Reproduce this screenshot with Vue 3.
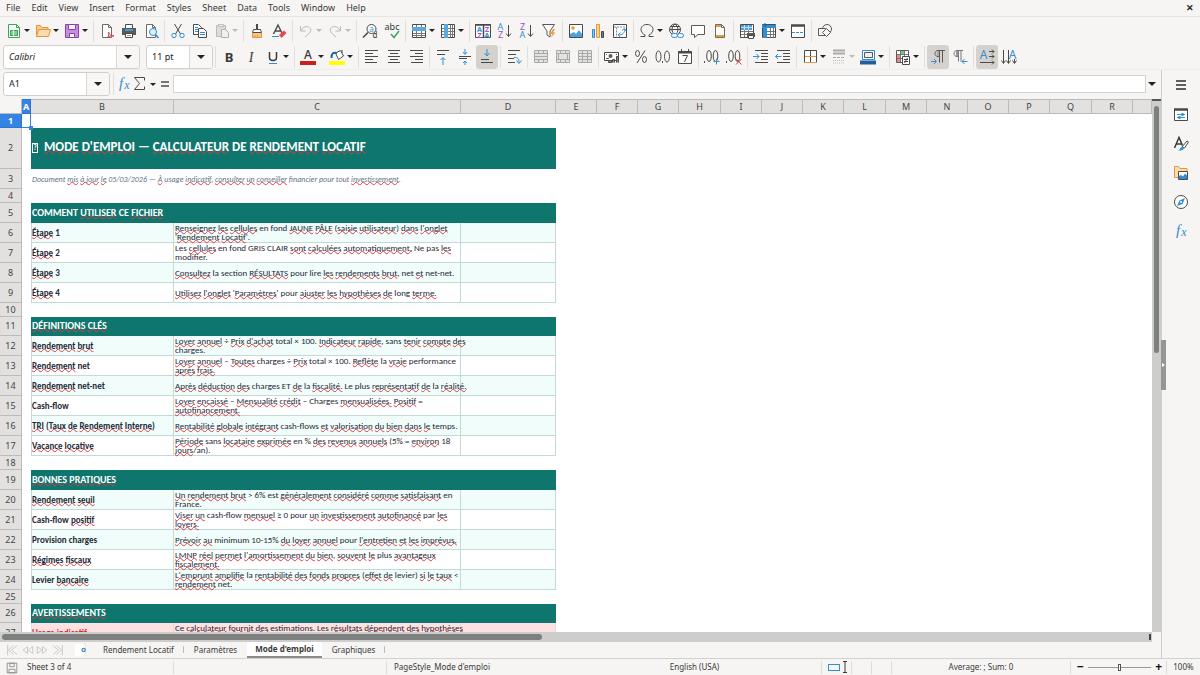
<script setup>
import { ref } from 'vue'

const menus = ['File', 'Edit', 'View', 'Insert', 'Format', 'Styles', 'Sheet', 'Data', 'Tools', 'Window', 'Help']

const lines = (rows) => `<path d="${rows.map(([x, y, w]) => `M${x} ${y}h${w}`).join('')}" stroke="#4a4a48"/>`
const glyph = (x, y, size, fill, text, extra = '') =>
  `<text x="${x}" y="${y}" font-size="${size}" fill="${fill}" text-anchor="middle" ${extra}>${text}</text>`
const page = '<path d="M3.5 1.5h6l3 3v10h-9z" fill="#fff" stroke="#6b6b69"/><path d="M9.5 1.5v3h3" stroke="#6b6b69"/>'
const gridBox = '<path d="M1.5 1.5h13v13h-13z" fill="#fff" stroke="#4a4a48"/>'

const icons = {
  new: '<path d="M2.5 1.5h8l3 3v10h-11z" fill="#fff" stroke="#3aa655"/><path d="M10.5 1.5v3h3" stroke="#3aa655"/><path d="M4 7h8v6H4z" fill="#3aa655"/><path d="M5 9h6M5 11h6M7.5 7v6" stroke="#d6f2dd"/>',
  open: '<path d="M1.5 13.5v-11h4l1.5 2h6v2" fill="#f8c98c" stroke="#e8953d"/><path d="M1.5 13.5l2-7h12l-2 7z" fill="#fbdcae" stroke="#e8953d"/>',
  save: '<path d="M1.5 1.5h13v13h-13z" fill="#c88be0" stroke="#8e3fae"/><path d="M4.5 1.5h7v5h-7z" fill="#fff" stroke="#8e3fae"/><path d="M5.5 10.5h5v4h-5z" fill="#fff" stroke="#8e3fae"/>',
  pdf: page + '<path d="M8 15c2-2 2-4 1.5-6c1 3 3 4 5.5 4c-3-.5-5 0-7 2" stroke="#e0393e"/>',
  print: '<path d="M4.5 5V1.5h7V5" fill="#fff" stroke="#4a4a48"/><path d="M1 5h14v7H1z" fill="#5a5a58"/><path d="M4 7h8" stroke="#3d9be0" stroke-width="2"/><path d="M4.5 10.5h7v4h-7z" fill="#fff" stroke="#4a4a48"/><path d="M6 12.5h4" stroke="#999"/>',
  preview: page + '<circle cx="10" cy="9" r="3.5" fill="#e2f1fb" stroke="#2f8fd4"/><path d="M12.5 11.5l3 3.5" stroke="#2f8fd4" stroke-width="1.5"/>',
  cut: '<path d="M4.5 1l6 10M11.5 1l-6 10" stroke="#4a4a48"/><circle cx="4" cy="12.5" r="2.2" stroke="#2f8fd4"/><circle cx="12" cy="12.5" r="2.2" stroke="#2f8fd4"/>',
  copy: '<path d="M1.5 1.5h5l3 3v7h-8z" fill="#fff" stroke="#4a4a48"/><path d="M3 4.5h3M3 6.5h3M3 8.5h3" stroke="#2f8fd4"/><path d="M6.5 5.5h5l3 3v6h-8z" fill="#fff" stroke="#4a4a48"/><path d="M8 9.5h5M8 11.5h5" stroke="#2f8fd4"/>',
  paste: '<path d="M2.5 2.5h9v11h-9z" fill="#dcdcda" stroke="#bcbcba"/><path d="M4.5 1.5h5v2h-5z" fill="#eee" stroke="#bcbcba"/><path d="M7.5 6.5h4l3 3v5h-7z" fill="#f0f0ee" stroke="#b0b0ae"/>',
  clone: '<path d="M8 1v5" stroke="#4a4a48" stroke-width="2"/><path d="M4.5 6.5h7l1 3h-9z" fill="#fff" stroke="#4a4a48"/><path d="M3 10h10v5H3z" fill="#f9c68a"/><path d="M3.5 10v4.5h9V10M6 12v2M8.5 12v2" stroke="#e8953d"/>',
  clear: '<path d="M2.5 11L7 2l4 8M4 8h5.5" stroke="#4a4a48" stroke-width="1.4"/><path d="M1 13.5h7" stroke="#2f8fd4"/><path d="M8 12l5-4.5l2.5 2.5L10.5 15z" fill="#e04a50"/>',
  undo: '<path d="M2.5 3v5h5M3 7.5c2-4 6-5 8.5-3s1.5 5-4.5 9.5" stroke="#b9b9b7"/>',
  redo: '<path d="M13.5 3v5h-5M13 7.5c-2-4-6-5-8.5-3s-1.5 5 4.5 9.5" stroke="#b9b9b7"/>',
  find: '<circle cx="9.5" cy="6" r="4.5" fill="#fff" stroke="#4a4a48"/><path d="M6 9.5L1 14.5" stroke="#4a4a48" stroke-width="1.6"/>' + glyph(9.5, 8.5, 8, '#2f8fd4', 'a') + glyph(13, 15, 8, '#3a3a38', 'd'),
  spell: glyph(8, 7, 9, '#3a3a38', 'abc') + '<path d="M7 11l3 3.5l5-6.5" stroke="#3aa655" stroke-width="1.5"/>',
  row: gridBox + '<path d="M5.5 2v12M10.5 2v12M2 10.5h12M2 12.5h12" stroke="#777"/><path d="M1 4h14v4H1z" fill="#5aaae2"/>',
  column: gridBox + '<path d="M2 5.5h12M2 8.5h12M2 11.5h12M10.5 2v12M12.5 2v12" stroke="#777"/><path d="M4 1h4v14H4z" fill="#5aaae2"/>',
  sort: '<path d="M.5 1.5h15v13H.5z" fill="#fff" stroke="#4a4a48"/><path d="M0 2h16M8.5 2v12" stroke="#4a4a48" stroke-width="1.5"/>' + glyph(4.5, 8.5, 7, '#2f8fd4', 'A', 'font-weight="700"') + glyph(12, 8.5, 7, '#a14fc4', 'Z', 'font-weight="700"') + glyph(4.5, 14.5, 7, '#a14fc4', 'Z', 'font-weight="700"') + glyph(12, 14.5, 7, '#2f8fd4', 'A', 'font-weight="700"'),
  asc: glyph(3.5, 7, 9, '#2f8fd4', 'A') + glyph(3.5, 15, 9, '#a14fc4', 'Z') + '<path d="M11.5 2v11M9 10.5l2.5 3l2.5-3" stroke="#4a4a48"/>',
  desc: glyph(3.5, 7, 9, '#a14fc4', 'Z') + glyph(3.5, 15, 9, '#2f8fd4', 'A') + '<path d="M11.5 2v11M9 10.5l2.5 3l2.5-3" stroke="#4a4a48"/>',
  filter: '<path d="M1.5 1.5h12L9 8v6l-3-2V8z" fill="#fff" stroke="#5a5a58"/><path d="M12 6l-3 5h2.5l-2 4l5-5.5H12L14 6z" fill="#f29a3a"/>',
  image: '<path d="M1.5 1.5h13v13h-13z" fill="#fff" stroke="#4a4a48"/><circle cx="5" cy="5" r="1.8" fill="#f29a3a"/><path d="M2 14v-3l4-2l2 2l3-4l3 4v3z" fill="#4ba0dd"/>',
  chart: '<path d="M2.5 6.5h2v8h-2z" fill="#8cc4ec" stroke="#2f8fd4"/><path d="M6.5 1.5h3v13h-3z" fill="#f9cf99" stroke="#e8953d"/><path d="M11.5 8.5h2v6h-2z" fill="#777" stroke="#4a4a48"/>',
  pivot: gridBox + '<path d="M2 4h12M4.5 4.5v10" stroke="#888" stroke-dasharray="2 1"/><path d="M6.5 12c4 0 6-2 6.5-6M10 7.5l2.5-2l1.5 2.5M8.5 9.5L6 12l2.5 2" stroke="#2f8fd4"/>',
  omega: '<path d="M1.5 13.5H6V12C3.5 10.5 2 9 2 6.5C2 3.5 4.5 1.5 8 1.5s6 2 6 5c0 2.5-1.5 4-4 5.5v1.5h4.5" stroke="#4a4a48"/>',
  link: '<circle cx="7" cy="6.5" r="5.5" stroke="#4a4a48"/><path d="M1.5 6.5h11M7 1c-4 3-4 8 0 11M7 1c4 3 4 8 0 11M2.5 3.5h9" stroke="#4a4a48"/><rect x="3.5" y="10.5" width="6" height="4" rx="2" fill="#f6f5f3" stroke="#2f8fd4"/><rect x="9.5" y="10.5" width="6" height="4" rx="2" fill="#f6f5f3" stroke="#2f8fd4"/>',
  comment: '<path d="M1.5 2.5h13v9H8l-3.5 3v-3h-3z" fill="#fff" stroke="#5a5a58"/>',
  header: page + '<path d="M4 3h5M4 13h8" stroke="#f29a3a" stroke-width="2"/>',
  area: gridBox + '<path d="M2 8.5h12M2 11.5h12M5.5 2v12M9.5 2v12" stroke="#777"/><path d="M2 2h11v5H2z" fill="#4ba0dd"/><path d="M2 4.5h11M5.5 2v5M9.5 2v5" stroke="#bfe0f6"/><path d="M8 10h8v4H8z" fill="#5a5a58"/><path d="M9.5 12.5h5v3h-5z" fill="#fff" stroke="#4a4a48"/>',
  freeze: gridBox + '<path d="M2 8.5h12M2 11.5h12M9.5 5v10M12.5 5v10" stroke="#777"/><path d="M1 2h14v3H1zM2 2h4v13H2z" fill="#2f8fd4"/><path d="M4 0v4M2 2h4" stroke="#1668a8"/>',
  split: '<path d="M1.5 2.5h13v12h-13z" fill="#fff" stroke="#4a4a48"/><path d="M1 2.5h14" stroke="#4a4a48" stroke-width="2.5"/><path d="M2 9.5h12" stroke="#2f8fd4" stroke-dasharray="3 1"/>',
  shapes: '<circle cx="10" cy="6" r="4.5" stroke="#5a5a58"/><path d="M1.5 5.5h7v7h-7z" fill="#f6f5f3" stroke="#5a5a58"/><path d="M9.5 5.5l4 4l-4 4l-4-4z" fill="#f6f5f3" stroke="#5a5a58"/>',
  bold: glyph(8, 13, 13, '#3a3a38', 'B', 'font-weight="700"'),
  italic: glyph(8, 13, 14, '#3a3a38', 'I', 'font-style="italic" font-family="Liberation Serif, serif"'),
  underline: '<path d="M4.5 3v5.5c0 4 7 4 7 0V3" stroke="#3a3a38" stroke-width="1.5"/><path d="M4 14.5h8" stroke="#2f8fd4"/>',
  fontcolor: glyph(8, 10, 12, '#3a3a38', 'A', 'font-weight="500"') + '<path d="M0 12h16v4H0z" fill="#c9211e"/>',
  fill: '<path d="M6.5 4l5-2.5l3 5.5l-5 3.5z" fill="#fff" stroke="#4a4a48"/><path d="M2.5 9c0-5 2-6 5.5-5" stroke="#1668a8" stroke-width="2"/><path d="M13 1v3" stroke="#4a4a48"/><path d="M0 12h16v4H0z" fill="#ffff00"/>',
  left: lines([[1, 1.5, 13], [1, 4.5, 8], [1, 7.5, 13], [1, 10.5, 8], [1, 13.5, 12]]),
  center: lines([[2, 1.5, 12], [4, 4.5, 8], [2, 7.5, 12], [4, 10.5, 8], [2, 13.5, 12]]),
  right: lines([[2, 1.5, 13], [7, 4.5, 8], [2, 7.5, 13], [7, 10.5, 8], [3, 13.5, 12]]),
  top: lines([[2, 1.5, 12], [2, 5.5, 8]]) + '<path d="M8 16V9M5.5 11L8 8.5l2.5 2.5" stroke="#2f8fd4"/>',
  middle: lines([[2, 7.5, 12], [2, 9.5, 8]]) + '<path d="M8 0v5M6 3l2 2.5L10 3M8 16v-4M6 14l2-2l2 2" stroke="#2f8fd4"/>',
  bottom: lines([[2, 10.5, 8], [2, 13.5, 12]]) + '<path d="M8 0v6.5M5.5 4L8 7l2.5-3" stroke="#2f8fd4"/>',
  wrap: lines([[2, 1.5, 12], [2, 5.5, 8], [2, 9.5, 6], [2, 13.5, 7]]) + '<path d="M8 8.5c4 0 5 1 5 5M10.5 11.5l2.5 3l2.5-3" stroke="#2f8fd4"/>',
  merge: '<path d="M1.5 1.5h13v12h-13z" fill="#e2e2e0" stroke="#a9a9a7"/><path d="M2 4.5h12M2 10.5h12M5.5 2v2M10.5 2v2M5.5 11v2M10.5 11v2M2 7.5h12" stroke="#a9a9a7"/>',
  mergec: '<path d="M1.5 1.5h13v12h-13z" fill="#e2e2e0" stroke="#a9a9a7"/><path d="M2 4.5h12M2 10.5h12M5.5 2v2M10.5 2v2M5.5 11v2M10.5 11v2M3.5 5v5M12.5 5v5" stroke="#a9a9a7"/>',
  unmerge: '<path d="M1.5 1.5h13v12h-13z" fill="#e2e2e0" stroke="#a9a9a7"/><path d="M2 4.5h12M2 7.5h12M2 10.5h12M5.5 2v11M10.5 2v11" stroke="#a9a9a7"/>',
  currency: '<path d="M.5 3.5h14v8H.5z" fill="#fff" stroke="#4a4a48"/><circle cx="6.5" cy="7" r="2" fill="#5a5a58"/><path d="M2 9.5h3M2 5.5h1M12 5.5h1" stroke="#5a5a58"/><path d="M8.5 13.5v-3h2v3M12.5 13.5V7.5h2v6M4.5 11.5h3v2h-3z" fill="#888" stroke="#4a4a48"/>',
  percent: '<ellipse cx="4.5" cy="4.5" rx="2" ry="3" stroke="#4a4a48"/><ellipse cx="11.5" cy="10.5" rx="2" ry="3" stroke="#4a4a48"/><path d="M12 1.5L4 14" stroke="#4a4a48"/>',
  number: '<ellipse cx="3.5" cy="7.5" rx="2.5" ry="5.5" stroke="#4a4a48"/><ellipse cx="12" cy="7.5" rx="2.5" ry="5.5" stroke="#4a4a48"/><path d="M7.5 12v2" stroke="#4a4a48"/>',
  date: '<path d="M1.5 2.5h13v12h-13z" fill="#fff" stroke="#4a4a48"/><path d="M1 3.5h14" stroke="#4a4a48" stroke-width="2"/><path d="M4.5 0v3M11.5 0v3M5.5 6.5h5l-3 6.5" stroke="#4a4a48"/>',
  adddec: '<path d="M.5 12v2" stroke="#4a4a48"/><ellipse cx="5" cy="7" rx="2.3" ry="5.5" stroke="#4a4a48"/><ellipse cx="11.5" cy="7" rx="2.3" ry="5.5" stroke="#4a4a48"/><path d="M12.5 9.5v6M9.5 12.5h6" stroke="#2f8fd4"/>',
  deldec: '<path d="M.5 12v2" stroke="#4a4a48"/><ellipse cx="5" cy="7" rx="2.3" ry="5.5" stroke="#4a4a48"/><ellipse cx="11.5" cy="7" rx="2.3" ry="5.5" stroke="#4a4a48"/><path d="M10 10l5.5 5.5M15.5 10L10 15.5" stroke="#e0393e"/>',
  indent: lines([[2, 1.5, 13], [8, 4.5, 7], [8, 7.5, 7], [8, 10.5, 7], [2, 13.5, 13]]) + '<path d="M0 7.5h6M3.5 5l2.5 2.5L3.5 10" stroke="#2f8fd4"/>',
  outdent: lines([[2, 1.5, 13], [8, 4.5, 7], [8, 7.5, 7], [8, 10.5, 7], [2, 13.5, 13]]) + '<path d="M6.5 7.5H.5M3 5L.5 7.5L3 10" stroke="#2f8fd4"/>',
  border: '<path d="M2.5 1.5h12v12h-12z" fill="#fff" stroke="#4a4a48"/><path d="M8.5 2v11" stroke="#4a4a48"/><path d="M3 7.5h11M2 13.5h13" stroke="#e8953d"/>',
  style: '<path d="M2 1.5h12M2 4.5h12" stroke="#aaaaa8" stroke-width="2"/><path d="M2 8.5h12" stroke="#aaaaa8" stroke-dasharray="3 1"/><path d="M2 11.5h12M2 14h12" stroke="#bbb" stroke-dasharray="1 1"/>',
  linecolor: '<path d="M2.5 1.5h12v9h-12z" fill="#fff" stroke="#2f8fd4"/><path d="M4.5 3.5h8v5h-8z" fill="#eee" stroke="#5a5a58"/><path d="M0 11.5h16v4H0z" fill="#1f5fa0"/>',
  cond: '<path d="M1.5 1.5h12v12h-12z" fill="#fff" stroke="#5a5a58"/><path d="M5 2h5v3H5z" fill="#7ac48a"/><path d="M2 6h4v7H2z" fill="#ee8a85"/><path d="M2 5.5h11M2 9.5h11M5.5 2v11M9.5 2v11" stroke="#777"/><path d="M7.5 7.5h7v8h-7z" fill="#fff" stroke="#4a4a48"/><path d="M9 10.5h4M9 12.5h4M12.5 9l-3 5" stroke="#4a4a48"/>',
  ltr: '<path d="M15 1.5H8c-4 0-4 6 0 6h1.5M9.5 1.5v12M12.5 1.5v12" stroke="#5a5a58"/><path d="M7 2h2v5H7z" fill="#aaa"/><path d="M1 12.5h5M4 10l2.5 2.5L4 15" stroke="#2f8fd4"/>',
  rtl: '<path d="M11 1.5H5c-4 0-4 6 0 6h1.5M6.5 1.5v11M9 1.5v11" stroke="#777"/><path d="M4 2h2v5H4z" fill="#999"/><path d="M15.5 12.5H10M12.5 10L10 12.5l2.5 2.5" stroke="#2f8fd4"/>',
  lr: glyph(4.5, 9.5, 12, '#2f8fd4', 'A') + '<path d="M10 2.5h5M10 7.5h5M1 13.5h14M13 .5l2 2l-2 2M13 5.5l2 2l-2 2M13 11.5l2 2l-2 2" stroke="#4a4a48"/>',
  tb: glyph(11.5, 9.5, 12, '#2f8fd4', 'A') + '<path d="M2.5 1v13M.5 11.5l2 3l2-3M7.5 1v13M5.5 11.5l2 3l2-3M13.5 10v4M11.5 11.5l2 3l2-3" stroke="#4a4a48"/>',
  sigma: '<path d="M12.5 4.5v-3h-10l5 6l-5 6h10v-3" stroke="#4a4a48"/>',
  equal: '<path d="M4 6h8M4 10h8" stroke="#4a4a48" stroke-width="1.5"/>',
  fx: glyph(5, 12, 15, '#2f8fd4', 'f', 'font-style="italic" font-family="Liberation Serif, serif"') + glyph(11, 13, 12, '#2f8fd4', 'x', 'font-style="italic" font-family="Liberation Serif, serif"'),
  burger: '<path d="M3 4h10M3 8h10M3 12h10" stroke="#2c2c2a" stroke-width="1.4"/>',
  props: '<path d="M1.5 2.5h13v11h-13z" fill="#fff" stroke="#4a4a48"/><path d="M1 2.5h14" stroke="#4a4a48" stroke-width="2.5"/><path d="M4 7.5h8M4 10.5h8" stroke="#2f8fd4"/><path d="M9.5 6v3M6.5 9v3" stroke="#2f8fd4" stroke-width="2"/>',
  styles: '<path d="M1.5 12L6 1.5l3.5 8M3 8h6" stroke="#3a3a38" stroke-width="1.5"/><path d="M9 11l5-6l1.5 1l-4 6z" fill="#fff" stroke="#4a4a48"/><path d="M5 14.5c2 0 2-3.5 4.5-3.5s2 4-4.5 3.5" fill="#2f8fd4"/>',
  gallery: '<path d="M1.5 12.5v-11h4l1.5 2h7v9z" fill="#fbdcae" stroke="#e8953d"/><path d="M5.5 6.5h9v8h-9z" fill="#fff" stroke="#4a4a48"/><path d="M6 14v-3l2-1l2 1.5l2-3l2 2V14z" fill="#2f8fd4"/>',
  navigator: '<circle cx="8" cy="8" r="6.5" fill="#fff" stroke="#4a4a48"/><path d="M12 4l-2.5 6L4 12l2.5-5.5z" fill="#2f8fd4"/><circle cx="8" cy="8" r="1" fill="#fff"/>',
  addsheet: '<path d="M1 1h12v12l-2 2H1z" fill="#fff"/><path d="M11 1h2v12l-2 2" stroke="#ddd"/><circle cx="11" cy="8" r="2.5" fill="#3a74c4"/><path d="M9.5 8h3M11 6.5v3" stroke="#fff"/>',
  doc: '<path d="M2.5 2.5h11v11h-11z" stroke="#8a8a88"/><path d="M5.5 2.5h5v4h-5zM4.5 9.5h7v4h-7z" stroke="#8a8a88"/>',
  first: '<path d="M2.5 2v12M13 3L7 8l6 5M9 3L3.5 8L9 13" stroke="#c4c4c2"/>',
  prev: '<path d="M8 4L3 8l5 4zM14 4L9 8l5 4z" stroke="#c4c4c2"/>',
  next: '<path d="M2 4l5 4l-5 4zM8 4l5 4l-5 4z" stroke="#c4c4c2"/>',
  last: '<path d="M13.5 2v12M3 3l6 5l-6 5M7 3l5.5 5L7 13" stroke="#c4c4c2"/>'
}

// "name>" is a button with a drop-down arrow, "|" a separator, "!" marks a pressed button, "?" a disabled arrow
const parse = (text) =>
  text.split(' ').map((token) => ({
    name: token.replace(/[>!?]/g, ''),
    menu: />/.test(token),
    on: /!/.test(token),
    off: /\?/.test(token)
  }))
const standardBar = parse('new> open> save> | pdf print preview | cut copy paste>? | clone clear | undo>? redo>? | find spell | row> column> | sort asc desc filter | image chart pivot | omega> link comment header | area freeze> split | shapes')
const formatBar = parse('bold italic underline> | fontcolor> fill> | left center right | top middle bottom! | wrap | merge mergec unmerge | currency> percent number date | adddec deldec | indent outdent | border> style>? linecolor> | cond> | ltr! rtl | lr! tb')
const sidebar = ['burger', 'props', 'styles', 'gallery', 'navigator', 'fx']

const letters = 'ABCDEFGHIJKLMNOPQR'.split('')
const colClass = (letter) => {
  if ('ABCD'.includes(letter)) return 'col-' + letter.toLowerCase()
  return 'HLQ'.includes(letter) ? 'col-wide' : 'col-std'
}

// "~" wraps words flagged by the spelling checker
const rows = [
  { kind: 'gap' },
  { kind: 'title', b: '~MODE~ ~D\'EMPLOI~ — ~CALCULATEUR~ DE ~RENDEMENT~ ~LOCATIF~' },
  { kind: 'note', b: 'Document ~mis~ ~à jour~ ~le~ 05/03/2026 — ~À~ usage ~indicatif~, ~consulter~ ~un~ ~conseiller~ financier pour tout ~investissement~.' },
  { kind: 'gap' },
  { kind: 'section', b: 'COMMENT ~UTILISER~ CE ~FICHIER~' },
  { kind: 'item', b: '~Étape~ 1', c: '~Renseignez~ ~les~ ~cellules~ en fond ~JAUNE~ ~PÂLE~ (~saisie~ ~utilisateur~) ~dans~ ~l\'onglet~\n\'~Rendement~ ~Locatif~\'.' },
  { kind: 'item', b: '~Étape~ 2', c: 'Les ~cellules~ en fond GRIS CLAIR ~sont~ ~calculées~ ~automatiquement.~ Ne pas ~les~\nmodifier.' },
  { kind: 'item', b: '~Étape~ 3', c: '~Consultez~ la section ~RÉSULTATS~ pour lire ~les~ ~rendements~ ~brut~, net ~et~ net-net.' },
  { kind: 'item', b: '~Étape~ 4', c: '~Utilisez~ ~l\'onglet~ \'~Paramètres~\' pour ~ajuster~ ~les~ ~hypothèses~ ~de~ long ~terme.~' },
  { kind: 'gap' },
  { kind: 'section low', b: '~DÉFINITIONS~ ~CLÉS~' },
  { kind: 'item', b: '~Rendement~ ~brut~', c: '~Loyer~ ~annuel~ ÷ ~Prix~ ~d\'achat~ total × 100. ~Indicateur~ ~rapide~, sans ~tenir~ ~compte~ ~des~\ncharges.' },
  { kind: 'item', b: '~Rendement~ net', c: '~Loyer~ ~annuel~ – ~Toutes~ charges ÷ ~Prix~ total × 100. ~Reflète~ la ~vraie~ performance\n~après~ ~frais.~' },
  { kind: 'item', b: '~Rendement~ net-net', c: '~Après~ ~déduction~ ~des~ charges ET ~de~ la ~fiscalité.~ Le plus ~représentatif~ ~de~ la ~réalité.~' },
  { kind: 'item', b: 'Cash-flow', c: '~Loyer~ ~encaissé~ – ~Mensualité~ ~crédit~ – Charges ~mensualisées.~ ~Positif~ =\n~autofinancement.~' },
  { kind: 'item', b: '~TRI~ (~Taux~ ~de~ ~Rendement~ ~Interne~)', c: '~Rentabilité~ ~globale~ ~intégrant~ cash-flows ~et~ ~valorisation~ ~du~ ~bien~ ~dans~ ~le~ temps.' },
  { kind: 'item', b: '~Vacance~ ~locative~', c: '~Période~ sans ~locataire~ ~exprimée~ en % ~des~ ~revenus~ ~annuels~ (5% = ~environ~ 18\n~jours~/an).' },
  { kind: 'gap' },
  { kind: 'section', b: '~BONNES~ ~PRATIQUES~' },
  { kind: 'item', b: '~Rendement~ ~seuil~', c: '~Un~ ~rendement~ ~brut~ > 6% est ~généralement~ ~considéré~ ~comme~ ~satisfaisant~ en\nFrance.' },
  { kind: 'item', b: 'Cash-flow ~positif~', c: '~Viser~ ~un~ cash-flow ~mensuel~ ≥ 0 pour ~un~ ~investissement~ ~autofinancé~ par ~les~\n~loyers.~' },
  { kind: 'item', b: 'Provision charges', c: '~Prévoir~ ~au~ minimum 10-15% ~du~ ~loyer~ ~annuel~ pour ~l\'entretien~ ~et~ ~les~ ~imprévus.~' },
  { kind: 'item', b: '~Régimes~ ~fiscaux~', c: '~LMNP~ ~réel~ ~permet~ ~l\'amortissement~ ~du~ ~bien~, ~souvent~ ~le~ plus ~avantageux~\n~fiscalement.~' },
  { kind: 'item', b: 'Levier ~bancaire~', c: '~L\'emprunt~ ~amplifie~ la ~rentabilité~ ~des~ ~fonds~ ~propres~ (~effet~ ~de~ levier) ~si~ ~le~ ~taux~ <\n~rendement~ net.' },
  { kind: 'gap' },
  { kind: 'section low', b: '~AVERTISSEMENTS~' },
  { kind: 'warn', b: '~Usage~ ~indicatif~', c: 'Ce ~calculateur~ ~fournit~ ~des~ estimations. Les ~résultats~ ~dépendent~ ~des~ ~hypothèses~\n~saisies.~' }
]
let tint = false
rows.forEach((row) => {
  tint = row.kind === 'item' ? !tint : false
  row.tint = tint
})
const parts = (text) => text.split('~').map((value, i) => ({ value, bad: i % 2 === 1 }))

const tabs = ['Rendement Locatif', 'Paramètres', "Mode d'emploi", 'Graphiques']
const activeTab = ref(2)
const fontName = ref('Calibri')
const fontSize = ref('11 pt')
const cellName = ref('A1')
const formula = ref('')
const zoom = ref(50)
</script>

<template>
  <div class="app">
    <nav class="menubar">
      <button v-for="menu in menus" :key="menu">{{ menu }}</button>
      <button class="close" aria-label="Close document">✕</button>
    </nav>

    <div class="toolbar" role="toolbar" aria-label="Standard">
      <template v-for="(item, i) in standardBar" :key="i">
        <i v-if="item.name === '|'" class="sep"></i>
        <button v-else class="tool" :class="{ drop: item.menu, off: item.off }" :aria-label="item.name">
          <svg viewBox="0 0 16 16" fill="none" v-html="icons[item.name]"></svg>
        </button>
      </template>
    </div>

    <div class="toolbar format" role="toolbar" aria-label="Formatting">
      <div class="combo font">
        <input v-model="fontName" aria-label="Font name" class="slanted" />
        <button aria-label="Font list"></button>
      </div>
      <div class="combo size">
        <input v-model="fontSize" aria-label="Font size" />
        <button aria-label="Size list"></button>
      </div>
      <i class="sep"></i>
      <template v-for="(item, i) in formatBar" :key="i">
        <i v-if="item.name === '|'" class="sep"></i>
        <button v-else class="tool" :class="{ drop: item.menu, off: item.off, on: item.on }" :aria-label="item.name">
          <svg viewBox="0 0 16 16" fill="none" v-html="icons[item.name]"></svg>
        </button>
      </template>
    </div>

    <div class="work">
      <main class="main">
        <div class="formula">
          <div class="combo name">
            <input v-model="cellName" aria-label="Name box" />
            <button aria-label="Cell names"></button>
          </div>
          <i class="sep"></i>
          <button class="tool narrow" aria-label="Function wizard"><svg viewBox="0 0 16 16" fill="none" v-html="icons.fx"></svg></button>
          <button class="tool drop sum" aria-label="Select function"><svg viewBox="0 0 16 16" fill="none" v-html="icons.sigma"></svg></button>
          <button class="tool narrow" aria-label="Formula"><svg viewBox="0 0 16 16" fill="none" v-html="icons.equal"></svg></button>
          <input v-model="formula" class="line" aria-label="Input line" />
          <button class="expand" aria-label="Expand formula bar"></button>
        </div>

        <div class="sheetarea">
          <div class="viewport">
            <table>
              <colgroup>
                <col class="col-head" />
                <col v-for="letter in letters" :key="letter" :class="colClass(letter)" />
                <col />
              </colgroup>
              <thead>
                <tr>
                  <th></th>
                  <th v-for="letter in letters" :key="letter" :class="{ current: letter === 'A' }">{{ letter }}</th>
                  <th></th>
                </tr>
              </thead>
              <tbody>
                <tr v-for="(row, i) in rows" :key="i" :class="[row.kind, { tint: row.tint }]">
                  <th :class="{ current: i === 0 }">{{ i + 1 }}</th>
                  <td :class="{ cursor: i === 0 }"></td>
                  <template v-if="row.kind === 'gap'">
                    <td colspan="18"></td>
                  </template>
                  <template v-else-if="!row.c">
                    <td colspan="3" class="band">
                      <div class="text"><span v-if="row.kind === 'title'" class="tofu">?</span><span v-for="(part, p) in parts(row.b)" :key="p" :class="{ bad: part.bad }">{{ part.value }}</span></div>
                    </td>
                    <td colspan="15"></td>
                  </template>
                  <template v-else>
                    <td class="cell label"><div class="text"><span v-for="(part, p) in parts(row.b)" :key="p" :class="{ bad: part.bad }">{{ part.value }}</span></div></td>
                    <td class="cell"><div class="text"><span v-for="(part, p) in parts(row.c)" :key="p" :class="{ bad: part.bad }">{{ part.value }}</span></div></td>
                    <td class="cell"></td>
                    <td colspan="15"></td>
                  </template>
                </tr>
              </tbody>
            </table>
          </div>
          <div class="vscroll"><div class="thumb"></div></div>
        </div>

        <div class="hscroll"><div class="thumb"></div><i class="grip"></i></div>

        <div class="tabs">
          <button v-for="name in ['first', 'prev', 'next', 'last']" :key="name" class="step" :aria-label="name + ' sheet'">
            <svg viewBox="0 0 16 16" fill="none" v-html="icons[name]"></svg>
          </button>
          <button class="add" aria-label="Add sheet"><svg viewBox="0 0 16 16" fill="none" v-html="icons.addsheet"></svg></button>
          <button v-for="(tab, i) in tabs" :key="tab" class="tab" :class="{ active: i === activeTab, ruled: i === 0 || i === 3 }" @click="activeTab = i">{{ tab }}</button>
        </div>
      </main>

      <aside class="sidebar">
        <button v-for="name in sidebar" :key="name" :aria-label="name"><svg viewBox="0 0 16 16" fill="none" v-html="icons[name]"></svg></button>
        <div class="handle"></div>
      </aside>
    </div>

    <footer class="status">
      <span class="doc"><svg viewBox="0 0 16 16" fill="none" v-html="icons.doc"></svg></span>
      <span>Sheet 3 of 4</span>
      <span></span>
      <span class="style">PageStyle_Mode d'emploi</span>
      <span class="mid">English (USA)</span>
      <span class="modes"><i class="rect"></i><svg viewBox="0 0 8 12" fill="none"><path d="M2 .5h4M2 11.5h4M4 1v10" stroke="#3a3a38" /></svg></span>
      <span></span>
      <span></span>
      <span class="mid">Average: ; Sum: 0</span>
      <span class="zoom">
        <button aria-label="Zoom out">−</button>
        <input v-model="zoom" type="range" min="0" max="100" aria-label="Zoom" />
        <button aria-label="Zoom in">+</button>
      </span>
      <span class="mid last">100%</span>
    </footer>
  </div>
</template>

<style>
html,
body {
  margin: 0;
  overflow: hidden;
}
</style>

<style scoped>
.app {
  display: flex;
  flex-direction: column;
  height: 100vh;
  overflow: hidden;
  background: #f6f5f3;
  color: #3a3a38;
  font: 9px/12px "Noto Sans", sans-serif;
}
button,
input {
  margin: 0;
  padding: 0;
  border: 0;
  background: none;
  color: inherit;
  font: inherit;
  outline: none;
}
svg {
  display: block;
  overflow: visible;
  font-family: "Noto Sans", sans-serif;
}
.menubar {
  display: flex;
  height: 16px;
  gap: 11px;
  padding: 0 6px;
  border-bottom: 1px solid #e6e5e3;
}
.close {
  margin-left: auto;
  color: #222;
  font-weight: 700;
}
.toolbar {
  display: flex;
  align-items: center;
  box-sizing: border-box;
  height: 27px;
  padding-left: 3px;
}
.format {
  height: 26px;
  border-bottom: 1px solid #eeedeb;
}
.tool {
  display: flex;
  align-items: center;
  flex: none;
  width: 22px;
  height: 24px;
  padding: 0 3px;
  border-radius: 3px;
}
.tool svg {
  flex: none;
  width: 16px;
  height: 16px;
}
.tool.on {
  background: #d5d2cd;
}
.tool.drop {
  width: 29px;
}
.tool.drop::after {
  content: "";
  flex: none;
  margin-left: 2px;
  border: 3px solid transparent;
  border-top-color: #222;
  border-bottom: 0;
}
.tool.off::after {
  border-top-color: #bbb;
}
.sep {
  flex: none;
  width: 1px;
  height: 22px;
  margin: 0 2px;
  background: #e1e0de;
}
.drop + .sep {
  margin-left: 3px;
}
.combo {
  display: flex;
  flex: none;
  box-sizing: border-box;
  height: 24px;
  border: 1px solid #d0cfcc;
  border-radius: 3px;
  background: #fff;
  overflow: hidden;
  color: #222;
}
.combo input {
  flex: 1;
  min-width: 0;
  padding-left: 5px;
}
.combo button {
  display: grid;
  place-items: center;
  width: 23px;
  border-left: 1px solid #d8d7d4;
  background: #f8f7f6;
}
.combo button::after,
.expand::after {
  content: "";
  border: 4px solid transparent;
  border-top-color: #222;
  border-bottom: 0;
}
.slanted {
  font-style: italic;
}
.font {
  width: 137px;
  margin-right: 6px;
}
.size {
  width: 67px;
}
.name {
  width: 107px;
  margin-right: 1px;
}
.work {
  display: flex;
  flex: 1;
  min-height: 0;
}
.main {
  display: flex;
  flex: 1;
  flex-direction: column;
  min-width: 0;
  border-right: 1px solid #cfcecc;
}
.formula {
  display: flex;
  align-items: center;
  height: 28px;
  padding: 0 3px 1px;
}
.formula .sum {
  width: 25px;
  padding: 0;
}
.formula .narrow {
  width: 16px;
  padding: 0;
}
.line {
  flex: 1;
  box-sizing: border-box;
  height: 18px;
  border: 1px solid #d4d3d0;
  background: #fff;
}
.expand {
  display: grid;
  place-items: center;
  width: 12px;
}
.sheetarea {
  display: flex;
  flex: 1;
  min-height: 0;
}
.viewport {
  flex: 1;
  overflow: hidden;
  background: #fff;
}
table {
  width: 100%;
  table-layout: fixed;
  border-spacing: 0;
}
.col-head { width: 22px; }
.col-a { width: 9px; }
.col-b { width: 143px; }
.col-c { width: 287px; }
.col-d { width: 95px; }
.col-std { width: 41px; }
.col-wide { width: 42px; }
th,
td {
  box-sizing: border-box;
  height: 20px;
  padding: 0;
}
th {
  border: solid #bcbbb9;
  border-width: 0 1px 1px 0;
  background: #e2e1df;
  color: #444;
  font-weight: 400;
  text-align: center;
}
thead th {
  height: 15px;
  line-height: 13px;
  border-top: 1px solid #bcbbb9;
}
thead th:first-child {
  border-color: #f6f5f3 #bcbbb9 #bcbbb9 #f6f5f3;
  background: #f6f5f3;
}
th.current {
  border-color: #2a75d8;
  background: #3584e4;
  color: #fff;
  font-weight: 700;
}
.gap th,
.gap td {
  height: 14px;
}
.title th,
.title td {
  height: 41px;
}
.low th,
.low td {
  height: 19px;
}
.cursor {
  position: relative;
  border: solid #3584e4;
  border-width: 0 1px 1px 0;
}
.cursor::after {
  content: "";
  position: absolute;
  right: -3px;
  bottom: -3px;
  width: 4px;
  height: 4px;
  background: #3584e4;
}
.text {
  padding-left: 1px;
  font-family: Carlito, Calibri, Lato, sans-serif;
  font-size: 9px;
  line-height: 9px;
  white-space: pre;
}
.bad {
  text-decoration: underline wavy #e0393e 1px;
  text-decoration-skip-ink: none;
  text-underline-offset: -1px;
}
.title .band,
.section .band {
  background: #0f766e;
  color: #fff;
  font-weight: 700;
}
.title .text {
  padding-bottom: 3px;
  font-size: 13px;
  line-height: 16px;
}
.section .text {
  padding-bottom: 1px;
  font-size: 10px;
  line-height: 12px;
}
.tofu {
  display: inline-block;
  box-sizing: border-box;
  width: 6px;
  height: 10px;
  margin-right: 6px;
  border: 1px solid #fff;
  font-size: 7px;
  line-height: 8px;
  text-align: center;
  vertical-align: middle;
}
.note .text {
  color: #64748b;
  font-size: 8px;
  font-style: italic;
}
.cell {
  padding-bottom: 1px;
  border: solid #c3dad8;
  border-width: 0 1px 1px 0;
  color: #1f2937;
}
.label {
  border-left-width: 1px;
  font-weight: 700;
}
.label .text {
  padding-left: 0;
}
.tint .cell {
  background: #f0fdfa;
}
.warn .cell {
  border-color: #f5d5d5;
  background: #fee2e2;
}
.warn .label {
  color: #dc2626;
}
.vscroll {
  box-sizing: border-box;
  width: 9px;
  padding: 5px 2px 0;
  background: #cdcdcb;
  border-top: 2px solid #555;
}
.vscroll .thumb {
  width: 5px;
  height: 47%;
  border-radius: 3px;
  background: #7e807f;
}
.hscroll {
  display: flex;
  box-sizing: border-box;
  height: 10px;
  margin-right: 9px;
  padding: 2px 1px 2px 2px;
  background: #cdcdcb;
}
.hscroll .thumb {
  width: 47%;
  border-radius: 3px;
  background: #7e807f;
}
.grip {
  width: 2px;
  margin-left: auto;
  background: #444;
}
.tabs {
  display: flex;
  height: 16px;
  padding-left: 5px;
  font-size: 8px;
}
.step svg {
  width: 15px;
  height: 14px;
}
.add {
  width: 17px;
  margin: 0 2px 0 9px;
}
.add svg {
  width: 14px;
  height: 14px;
}
.tab {
  position: relative;
  padding: 0 10px;
}
.ruled::after {
  content: "";
  position: absolute;
  right: 0;
  top: 4px;
  width: 1px;
  height: 7px;
  background: #bbb;
}
.active {
  border-bottom: 2px solid #8c8c8a;
  padding: 0 8px;
  background: #fff;
  font-weight: 700;
}
.sidebar {
  position: relative;
  display: flex;
  flex-direction: column;
  align-items: center;
  gap: 13px;
  width: 38px;
  padding-top: 7px;
}
.sidebar svg {
  width: 16px;
  height: 16px;
}
.sidebar button:first-child {
  margin-bottom: 1px;
}
.handle {
  position: absolute;
  left: -1px;
  top: 46%;
  width: 5px;
  height: 50px;
  background: #949694;
}
.handle::after {
  content: "";
  position: absolute;
  left: 1px;
  top: 23px;
  border: 2px solid transparent;
  border-left: 3px solid #fff;
  border-right: 0;
}
.status {
  display: grid;
  grid-template-columns: 24px 150px 213px 181fr 254fr 30px 20px 20px 179px 96px 33px;
  align-items: center;
  height: 16px;
  border-top: 1px solid #d2d1cf;
  font-size: 8px;
}
.status > span {
  box-sizing: border-box;
  height: 13px;
  padding-left: 3px;
  border-right: 1px solid #dddcda;
  white-space: nowrap;
}
.status > .doc {
  padding-left: 5px;
  border-color: transparent;
}
.doc svg {
  width: 14px;
  height: 14px;
}
.status > .style {
  padding-left: 7px;
  border: 0;
}
.status > .mid {
  padding: 0;
  text-align: center;
}
.status > .last {
  border: 0;
}
.modes {
  display: flex;
  align-items: center;
  gap: 1px;
}
.modes svg {
  width: 8px;
  height: 12px;
}
.rect {
  box-sizing: border-box;
  width: 12px;
  height: 7px;
  margin-left: 3px;
  border: 1px solid #2f8fd4;
}
.status > .zoom {
  display: flex;
  align-items: center;
  gap: 4px;
  padding: 0 4px 0 6px;
}
.zoom button {
  flex: none;
  color: #111;
  font-size: 12px;
  font-weight: 700;
}
.zoom input {
  flex: 1;
  min-width: 0;
  height: 9px;
  appearance: none;
  background: linear-gradient(#999, #999) center / 100% 1px no-repeat;
}
.zoom input::-webkit-slider-thumb {
  appearance: none;
  box-sizing: border-box;
  width: 3px;
  height: 7px;
  border: 1px solid #555;
  background: #fff;
}
</style>
